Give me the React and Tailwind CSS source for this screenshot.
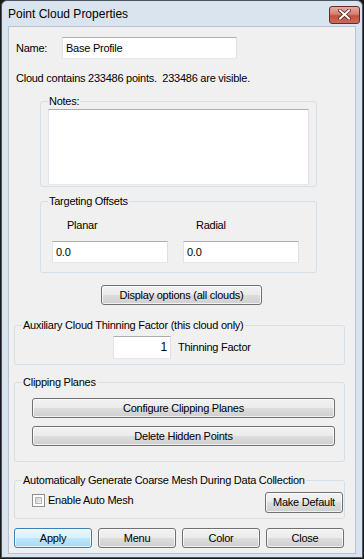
import React from "react";

const font = { fontFamily: '"Liberation Sans", Arial, sans-serif' };

function Btn({ children, className = "", primary = false }) {
  const base = primary
    ? "border-[#3c7fb1] bg-[linear-gradient(to_bottom,#eaf6fd_0%,#d9f0fc_50%,#bee6fd_50%,#a7d9f5_100%)]"
    : "border-[#707070] bg-[linear-gradient(to_bottom,#f2f2f2_0%,#ebebeb_50%,#dddddd_50%,#cfcfcf_100%)]";
  return (
    <div
      className={`flex items-center justify-center border rounded-[3px] h-[20px] text-[11px] leading-[13px] tracking-[-0.25px] text-black shadow-[inset_0_0_0_1px_rgba(255,255,255,0.7)] ${base} ${className}`}
    >
      {children}
    </div>
  );
}

function Field({ children, className = "", align = "left" }) {
  return (
    <div
      className={`flex items-center bg-white border border-[#e3e9ef] border-t-[#abadb3] border-l-[#e2e3ea] border-r-[#dbdfe6] px-[3px] text-[11px] leading-[13px] tracking-[-0.25px] text-black ${
        align === "right" ? "justify-end" : ""
      } ${className}`}
    >
      {children}
    </div>
  );
}

function Group({ label, className = "", children }) {
  return (
    <fieldset
      className={`border border-[#d5dfe5] rounded-[3px] m-0 p-0 min-w-0 ${className}`}
    >
      <legend className="ml-[7px] px-[1px] text-[11px] leading-[13px] tracking-[-0.25px] text-black">
        {label}
      </legend>
      {children}
    </fieldset>
  );
}

export default function App() {
  return (
    <div
      className="w-[364px] h-[559px] bg-[#1a1a1a] px-px pb-px overflow-hidden"
      style={font}
    >
      <div className="w-full h-full border border-[#4a5561] rounded-t-[6px] bg-[#dae4ee] flex flex-col">
        {/* Title bar */}
        <div className="h-[25px] flex items-center justify-between pl-[6px] pr-[2px] shrink-0">
          <span className="text-[12px] leading-[14px] text-black mt-[1px]">
            Point Cloud Properties
          </span>
          <div className="w-[31px] h-[18px] mt-[2px] rounded-[3px] border border-[#6e2a22] bg-[linear-gradient(to_bottom,#e9a99f_0%,#d47f72_45%,#c4503f_55%,#cf6a58_100%)] flex items-center justify-center">
            <svg width="13" height="11" viewBox="0 0 13 11">
              <path
                d="M2 1.5 L11 9.5 M11 1.5 L2 9.5"
                stroke="#5a231c"
                strokeWidth="3.6"
                strokeLinecap="square"
              />
              <path
                d="M2 1.5 L11 9.5 M11 1.5 L2 9.5"
                stroke="#ffffff"
                strokeWidth="2"
                strokeLinecap="square"
              />
            </svg>
          </div>
        </div>

        {/* Body */}
        <div className="mx-[6px] h-[528px] bg-[#f0f0f0] border border-[#b7c3cf] flex flex-col text-black text-[11px] leading-[13px] tracking-[-0.25px]">
          {/* Name row */}
          <div className="flex items-center mt-[10px] pl-[7px]">
            <span className="w-[46px]">Name:</span>
            <Field className="w-[175px] h-[22px]">Base Profile</Field>
          </div>

          <div className="mt-[12px] pl-[7px] leading-[14px] whitespace-pre">
            {"Cloud contains 233486 points.  233486 are visible."}
          </div>

          {/* Notes */}
          <Group label="Notes:" className="mt-[10px] ml-[31px] w-[277px]">
            <div className="ml-[7px] mt-[1px] mb-[1px] w-[261px] h-[76px] bg-white border border-[#e3e9ef] border-t-[#abadb3] border-l-[#e2e3ea] border-r-[#dbdfe6]" />
          </Group>

          {/* Targeting Offsets */}
          <Group
            label="Targeting Offsets"
            className="mt-[8px] ml-[31px] w-[277px]"
          >
            <div className="flex gap-[15px] ml-[11px] mt-[11px] mb-[9px]">
              <div className="flex flex-col w-[116px]">
                <span className="pl-[15px]">Planar</span>
                <Field className="mt-[9px] w-[116px] h-[22px]">0.0</Field>
              </div>
              <div className="flex flex-col w-[116px]">
                <span className="pl-[13px]">Radial</span>
                <Field className="mt-[9px] w-[116px] h-[22px]">0.0</Field>
              </div>
            </div>
          </Group>

          <Btn className="mt-[12px] ml-[92px] w-[161px]">
            Display options (all clouds)
          </Btn>

          {/* Auxiliary */}
          <Group
            label="Auxiliary Cloud Thinning Factor (this cloud only)"
            className="mt-[14px] ml-[5px] w-[331px]"
          >
            <div className="flex items-center ml-[98px] mt-[4px] mb-[5px]">
              <Field align="right" className="w-[58px] h-[23px] text-[12px]">
                1
              </Field>
              <span className="ml-[7px]">Thinning Factor</span>
            </div>
          </Group>

          {/* Clipping planes */}
          <Group
            label="Clipping Planes"
            className="mt-[11px] ml-[5px] w-[331px]"
          >
            <div className="flex flex-col gap-[8px] ml-[17px] mt-[9px] mb-[15px]">
              <Btn className="w-[303px]">Configure Clipping Planes</Btn>
              <Btn className="w-[303px]">Delete Hidden Points</Btn>
            </div>
          </Group>

          {/* Auto mesh */}
          <Group
            label="Automatically Generate Coarse Mesh During Data Collection"
            className="mt-[12px] ml-[5px] w-[331px]"
          >
            <div className="flex items-start justify-between ml-[17px] mr-[1px] mt-[5px] mb-[5px]">
              <div className="flex items-center mt-[2px]">
                <div className="w-[13px] h-[13px] border border-[#8e8f8f] bg-white p-[2px]">
                  <div className="w-full h-full bg-[linear-gradient(135deg,#cbcfd5_0%,#f6f6f6_100%)] border border-[#b3b6ba]" />
                </div>
                <span className="ml-[3px]">Enable Auto Mesh</span>
              </div>
              <Btn className="w-[78px] h-[21px]">Make Default</Btn>
            </div>
          </Group>

          {/* Bottom buttons */}
          <div className="flex gap-[6px] ml-[5px] mt-[9px]">
            <Btn primary className="w-[78px]">
              Apply
            </Btn>
            <Btn className="w-[78px]">Menu</Btn>
            <Btn className="w-[78px]">Color</Btn>
            <Btn className="w-[78px]">Close</Btn>
          </div>
        </div>
      </div>
    </div>
  );
}
